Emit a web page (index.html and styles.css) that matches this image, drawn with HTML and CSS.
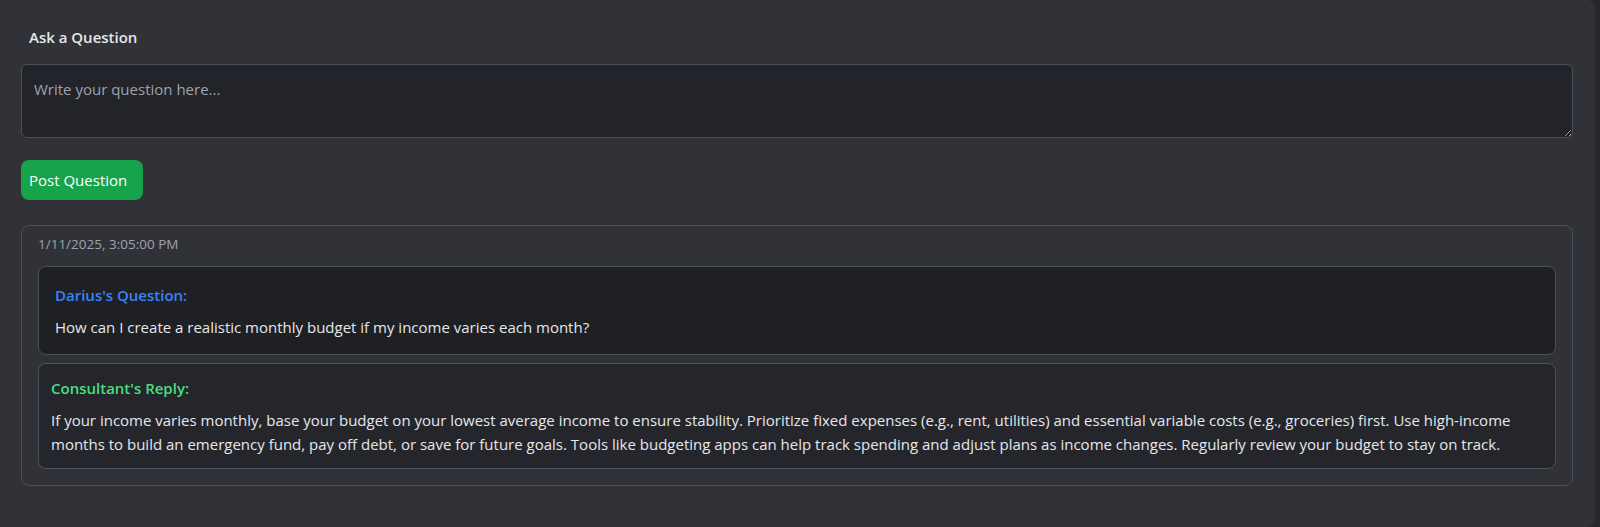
FILE: index.html
```html
<!DOCTYPE html>
<html lang="en">
<head>
<meta charset="utf-8">
<title>Ask a Question</title>
<link rel="stylesheet" href="styles.css">
</head>
<body>
<main class="panel">
  <h2 class="panel-title">Ask a Question</h2>
  <textarea class="question-input" placeholder="Write your question here..."></textarea>
  <button class="post-btn" type="button">Post Question</button>
  <section class="thread">
    <div class="thread-date">1/11/2025, 3:05:00 PM</div>
    <div class="question-box">
      <div class="question-label">Darius's Question:</div>
      <p class="question-text">How can I create a realistic monthly budget if my income varies each month?</p>
    </div>
    <div class="reply-box">
      <div class="reply-label">Consultant's Reply:</div>
      <p class="reply-text">If your income varies monthly, base your budget on your lowest average income to ensure stability. Prioritize fixed expenses (e.g., rent, utilities) and essential variable costs (e.g., groceries) first. Use high-income months to build an emergency fund, pay off debt, or save for future goals. Tools like budgeting apps can help track spending and adjust plans as income changes. Regularly review your budget to stay on track.</p>
    </div>
  </section>
</main>
</body>
</html>
```

FILE: styles.css
```css
* { box-sizing: border-box; }
html, body {
  margin: 0;
  height: 100%;
  background: #27282c;
}
body {
  font-family: "Open Sans", "Noto Sans", "Liberation Sans", sans-serif;
  font-size: 15px;
  line-height: 24px;
  color: #e5e7eb;
}
.panel {
  width: 1595px;
  min-height: 527px;
  background: #313238;
  border-radius: 0 8px 8px 0;
  padding: 25px 22px 0 21px;
  display: flex;
  flex-direction: column;
  align-items: flex-start;
}
.panel-title {
  margin: 0 0 15px;
  padding-left: 8px;
  font-size: 15px;
  font-weight: 600;
  color: #e5e7eb;
}
.question-input {
  display: block;
  width: 100%;
  height: 74px;
  margin: 0;
  padding: 12px 12px;
  background: #232429;
  border: 1px solid #4b505b;
  border-radius: 6px;
  color: #e5e7eb;
  font: inherit;
  resize: vertical;
  outline: none;
}
.question-input::placeholder { color: #9ca3af; }
.post-btn {
  margin-top: 22px;
  width: 122px;
  height: 40px;
  padding: 0 0 0 8px;
  text-align: left;
  background: #16a34a;
  border: none;
  border-radius: 8px;
  color: #ffffff;
  font: inherit;
  cursor: pointer;
}
.thread {
  margin-top: 25px;
  width: 100%;
  border: 1px solid #4b505b;
  border-radius: 8px;
  padding: 8px 16px 16px;
}
.thread-date {
  font-size: 13.5px;
  line-height: 20px;
  color: #9ca3af;
  margin-bottom: 12px;
}
.question-box {
  background: #1f2024;
  border: 1px solid #4b505b;
  border-radius: 8px;
  padding: 16px 16px 15px;
}
.question-label {
  font-weight: 600;
  color: #3b82f6;
  margin-bottom: 8px;
}
.question-text { margin: 0; }
.reply-box {
  margin-top: 8px;
  background: #25262b;
  border: 1px solid #4b505b;
  border-radius: 8px;
  padding: 12px;
}
.reply-label {
  font-weight: 600;
  color: #4ade80;
  margin-bottom: 8px;
}
.reply-text { margin: 0; }
```
